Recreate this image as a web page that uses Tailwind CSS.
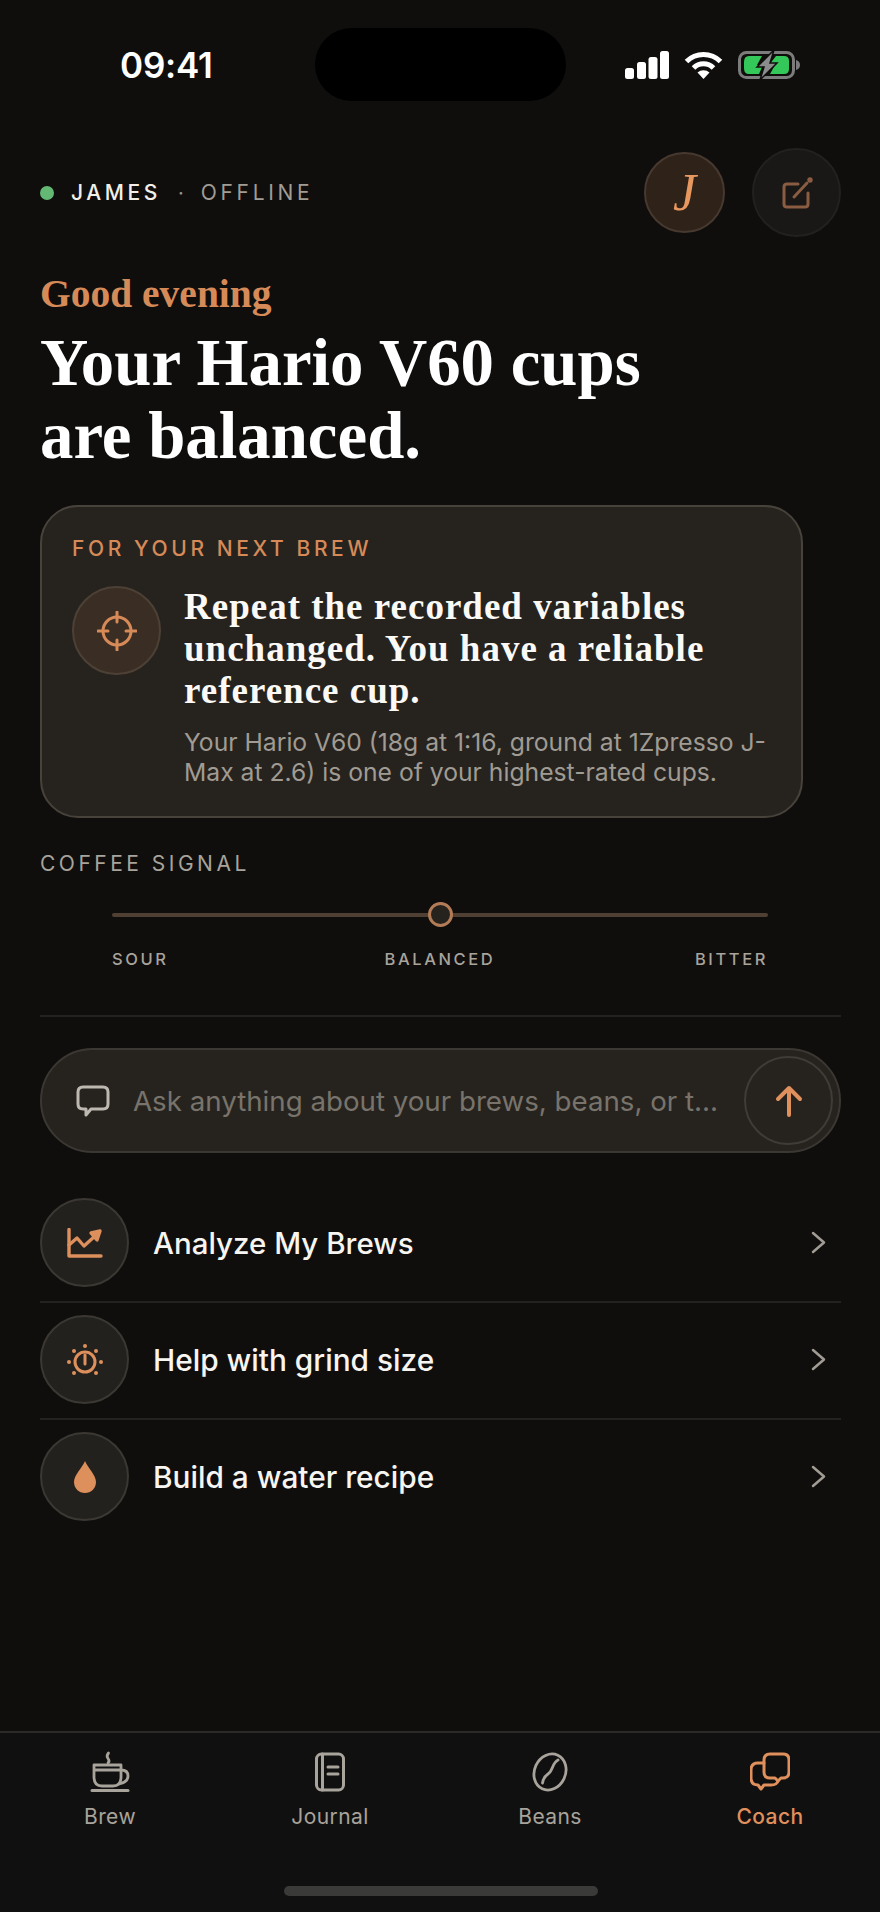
<!DOCTYPE html>
<html lang="en">
<head>
<meta charset="utf-8">
<script src="https://cdn.jsdelivr.net/npm/@tailwindcss/browser@4"></script>
<title>Coach</title>
</head>
<body class="m-0 bg-[#0f0e0d]">
<div class="relative w-[880px] h-[1912px] overflow-hidden bg-[#0f0e0d] text-white font-['Inter',sans-serif] flex flex-col">

  <!-- status bar -->
  <div class="flex items-center h-[73px] mt-[28px] pl-[120px] shrink-0">
    <div class="w-[195px] text-[35px] leading-[40px] font-semibold tracking-[-0.2px]">09:41</div>
    <div class="w-[251px] h-[73px] rounded-full bg-black"></div>
    <div class="flex items-center ml-[59px]">
      <svg width="44" height="28" viewBox="0 0 44 28" fill="#fff"><rect x="0" y="17" width="9" height="11" rx="2.5"/><rect x="12" y="11" width="9" height="17" rx="2.5"/><rect x="23.500" y="6" width="9" height="22" rx="2.500"/><rect x="35" y="0" width="9" height="28" rx="2.500"/></svg>
      <svg class="ml-[15px]" width="39" height="28" viewBox="0 0 39 28" fill="none" stroke="#fff" stroke-width="5"><path d="M2.500 10.500 A24 24 0 0 1 36.500 10.500"/><path d="M9.500 17 A14 14 0 0 1 29.500 17"/><path d="M19.500 28 L13.500 21.500 A9 9 0 0 1 25.500 21.500 Z" fill="#fff" stroke="none"/></svg>
      <svg class="ml-[15px]" width="63" height="30" viewBox="0 0 63 30" fill="none"><rect x="1.500" y="2.500" width="54" height="25" rx="7" stroke="#7c7c7c" stroke-width="3"/><path d="M6 12 Q6 6 11 6 H24 L19 15 H25 L21 24 H11 Q6 24 6 18 Z" fill="#34c759"/><path d="M38 6 H46 Q51 6 51 11 V19 Q51 24 46 24 H32 L37 15 H31 Z" fill="#34c759"/><path d="M36 0 L19 17 H26 L22 30 L39 13 H32 Z" fill="#8b8d8c" stroke="#0f0e0d" stroke-width="1.500"/><path d="M58 10 Q62 11 62 15 Q62 19 58 20 Z" fill="#7c7c7c"/></svg>
    </div>
  </div>

  <!-- header -->
  <div class="flex items-center mt-[47px] pl-[40px] pr-[39px] shrink-0">
    <span class="w-[14px] h-[14px] rounded-full bg-[#63b873]"></span>
    <span class="ml-[17px] text-[21px] font-medium tracking-[3.6px] text-[#f2efe9]">JAMES</span>
    <span class="ml-[17px] text-[20px] text-[#9b968e]">·</span>
    <span class="ml-[17px] text-[21px] tracking-[3.7px] text-[#a19c94]">OFFLINE</span>
    <div class="ml-auto w-[81px] h-[81px] rounded-full bg-[#2e2219] border-2 border-[#47392f] flex items-center justify-center font-['Liberation_Serif',serif] italic text-[52px] leading-none text-[#e8985f]">J</div>
    <div class="ml-[27px] w-[89px] h-[89px] rounded-full bg-[#191816] border-2 border-[#23211f] flex items-center justify-center">
      <svg width="32" height="32" viewBox="0 0 32 32" fill="none" stroke="#8a5c41" stroke-width="3" stroke-linecap="round" stroke-linejoin="round"><path d="M17 7 H6 Q3 7 3 10 V27 Q3 30 6 30 H24 Q27 30 27 27 V16"/><path d="M13 20 L26 6"/><circle cx="29" cy="3" r="1.200" fill="#8a5c41"/></svg>
    </div>
  </div>

  <!-- greeting -->
  <div class="mt-[35px] ml-[40px] text-[39.500px] leading-[44px] font-['Liberation_Serif',serif] font-bold text-[#d68a58] shrink-0">Good evening</div>
  <h1 class="mt-[10px] ml-[40px] text-[66.800px] leading-[73px] font-['Liberation_Serif',serif] font-bold text-white shrink-0">Your Hario V60 cups<br>are balanced.</h1>

  <!-- card -->
  <div class="mt-[33px] ml-[40px] w-[763px] h-[313px] rounded-[38px] bg-[#26231f] border-2 border-[#47423a] pl-[30px] pt-[28px] shrink-0">
    <div class="text-[21px] leading-[28px] font-medium tracking-[3.6px] text-[#d68a58]">FOR YOUR NEXT BREW</div>
    <div class="flex mt-[23px]">
      <div class="w-[89px] h-[89px] rounded-full bg-[#3a2d23] border-2 border-[#4d4136] flex items-center justify-center shrink-0">
        <svg width="40" height="40" viewBox="0 0 40 40" fill="none" stroke="#d68a58" stroke-width="3" stroke-linecap="round"><circle cx="20" cy="20" r="14"/><path d="M20 1 V11 M20 29 V39 M1 20 H11 M29 20 H39"/></svg>
      </div>
      <div class="ml-[23px] w-[600px]">
        <div class="text-[37px] leading-[42px] tracking-[1px] font-['Liberation_Serif',serif] font-bold text-[#fbf9f6]">Repeat the recorded variables<br>unchanged. You have a reliable<br>reference cup.</div>
        <div class="mt-[15px] text-[24.700px] leading-[30px] text-[#a09b93]">Your Hario V60 (18g at 1:16, ground at 1Zpresso J-<br>Max at 2.6) is one of your highest-rated cups.</div>
      </div>
    </div>
  </div>

  <!-- signal -->
  <div class="mt-[32px] ml-[40px] text-[21px] leading-[28px] tracking-[3.5px] text-[#a8a39b] shrink-0">COFFEE SIGNAL</div>
  <div class="relative mt-[24px] ml-[112px] w-[656px] h-[25px] flex items-center shrink-0">
    <div class="w-full h-[4px] rounded-full bg-[#4f4033]"></div>
    <div class="absolute left-[316px] top-0 w-[25px] h-[25px] rounded-full bg-[#26231f] border-[3px] border-[#b37c56]"></div>
  </div>
  <div class="mt-[20px] ml-[112px] w-[656px] grid grid-cols-3 text-[16.500px] leading-[24px] font-medium tracking-[2.6px] text-[#a8a39b] shrink-0">
    <span>SOUR</span><span class="text-center">BALANCED</span><span class="text-right">BITTER</span>
  </div>
  <div class="mt-[44px] ml-[40px] w-[801px] h-[2px] bg-[#232220] shrink-0"></div>

  <!-- input -->
  <div class="mt-[31px] ml-[40px] w-[801px] h-[105px] rounded-full bg-[#26231f] border-2 border-[#3b3833] flex items-center pl-[34px] pr-[6px] shrink-0">
    <svg class="shrink-0" width="34" height="32" viewBox="0 0 34 32" fill="none" stroke="#bdb8b0" stroke-width="3" stroke-linejoin="round"><path d="M7 2 H27 Q32 2 32 7 V19 Q32 24 27 24 H15 L10 30 V24 H7 Q2 24 2 19 V7 Q2 2 7 2 Z"/></svg>
    <div class="ml-[23px] w-[600px] text-[27.700px] leading-[36px] text-[#78736b] whitespace-nowrap">Ask anything about your brews, beans, or t...</div>
    <div class="ml-auto w-[89px] h-[89px] rounded-full border-2 border-[#3f3b36] flex items-center justify-center shrink-0">
      <svg width="28" height="32" viewBox="0 0 28 32" fill="none" stroke="#e0905c" stroke-width="4" stroke-linecap="round" stroke-linejoin="round"><path d="M14 30 V3 M3 14 L14 3 L25 14"/></svg>
    </div>
  </div>

  <!-- rows -->
  <div class="mt-[45px] ml-[40px] w-[801px] flex flex-col gap-[12px] shrink-0">
    <div class="flex items-center h-[105px] pb-[14px] border-b-2 border-[#232220]">
      <div class="w-[89px] h-[89px] rounded-full bg-[#23211e] border-2 border-[#3b3833] flex items-center justify-center">
        <svg width="36" height="30" viewBox="0 0 36 30" fill="none" stroke="#dd8f5c" stroke-width="3.400" stroke-linecap="round" stroke-linejoin="round"><path d="M2 1.500 V28 H34"/><path d="M2 17 L10 10 L17 18 L28 8"/><path d="M24 5 L33 3 L30 12 Z" fill="#dd8f5c"/></svg>
      </div>
      <div class="ml-[24px] text-[29.500px] leading-[36px] font-medium text-[#f7f5f1]">Analyze My Brews</div>
      <svg class="ml-auto mr-[15px]" width="15" height="23" viewBox="0 0 15 23" fill="none" stroke="#a09b93" stroke-width="2.500" stroke-linecap="round" stroke-linejoin="round"><path d="M2 2 L13 11.500 L2 21"/></svg>
    </div>
    <div class="flex items-center h-[105px] pb-[14px] border-b-2 border-[#232220]">
      <div class="w-[89px] h-[89px] rounded-full bg-[#23211e] border-2 border-[#3b3833] flex items-center justify-center">
        <svg class="mt-[4px]" width="36" height="36" viewBox="0 0 36 36" fill="none" stroke="#dd8f5c" stroke-width="3" stroke-linecap="round"><circle cx="18" cy="18" r="10"/><path d="M18 11 V20"/><g fill="#dd8f5c" stroke="none"><circle cx="18" cy="2" r="2"/><circle cx="7" cy="7" r="2"/><circle cx="29" cy="7" r="2"/><circle cx="2" cy="18" r="2"/><circle cx="34" cy="18" r="2"/><circle cx="7" cy="29" r="2"/><circle cx="29" cy="29" r="2"/></g></svg>
      </div>
      <div class="ml-[24px] text-[29.800px] leading-[36px] font-medium text-[#f7f5f1]">Help with grind size</div>
      <svg class="ml-auto mr-[15px]" width="15" height="23" viewBox="0 0 15 23" fill="none" stroke="#a09b93" stroke-width="2.500" stroke-linecap="round" stroke-linejoin="round"><path d="M2 2 L13 11.500 L2 21"/></svg>
    </div>
    <div class="flex items-center h-[89px]">
      <div class="w-[89px] h-[89px] rounded-full bg-[#23211e] border-2 border-[#3b3833] flex items-center justify-center">
        <svg width="22" height="32" viewBox="0 0 22 32" fill="#dd8f5c"><path d="M11 0 C14 7 22 14 22 21 C22 27.500 17 32 11 32 C5 32 0 27.500 0 21 C0 14 8 7 11 0 Z"/></svg>
      </div>
      <div class="ml-[24px] text-[29.800px] leading-[36px] font-medium text-[#f7f5f1]">Build a water recipe</div>
      <svg class="ml-auto mr-[15px]" width="15" height="23" viewBox="0 0 15 23" fill="none" stroke="#a09b93" stroke-width="2.500" stroke-linecap="round" stroke-linejoin="round"><path d="M2 2 L13 11.500 L2 21"/></svg>
    </div>
  </div>

  <!-- tab bar -->
  <div class="mt-auto h-[181px] shrink-0 bg-[#111010] border-t-2 border-[#2b2a28] flex flex-col">
    <div class="grid grid-cols-4 pt-[18px]">
      <div class="flex flex-col items-center text-[#a8a39b]">
        <svg width="40" height="42" viewBox="0 0 40 42" fill="none" stroke="currentColor" stroke-width="2.800" stroke-linecap="round" stroke-linejoin="round"><path d="M18.500 2 Q16 5 18 7.500 Q20 10 18 12"/><path d="M4 14 H31 V26 Q31 35 23 35 H12 Q4 35 4 26 Z"/><path d="M5 19 H30"/><path d="M31 19 Q38 19 38 25 Q38 31 29 33"/><path d="M2 39.500 H38" stroke-width="3"/></svg>
        <div class="mt-[10px] text-[21px] leading-[28px] tracking-[0.4px]">Brew</div>
      </div>
      <div class="flex flex-col items-center text-[#a8a39b]">
        <svg width="30" height="42" viewBox="0 0 30 42" fill="none" stroke="currentColor" stroke-width="3" stroke-linecap="round"><rect x="1.500" y="3" width="27" height="36" rx="5"/><path d="M7.500 3 V39 M13 16 H23 M13 23 H23"/></svg>
        <div class="mt-[10px] text-[21px] leading-[28px] tracking-[0.4px]">Journal</div>
      </div>
      <div class="flex flex-col items-center text-[#a8a39b]">
        <svg width="36" height="42" viewBox="0 0 36 42" fill="none" stroke="currentColor" stroke-width="2.800" stroke-linecap="round"><ellipse cx="18" cy="21" rx="15.500" ry="18.500" transform="rotate(25 18 21)"/><path d="M26 9 C20 12 21 20 16 23 C13 25 11 28 10.500 32"/></svg>
        <div class="mt-[10px] text-[21px] leading-[28px] tracking-[0.4px]">Beans</div>
      </div>
      <div class="flex flex-col items-center text-[#e0905c]">
        <svg width="40" height="42" viewBox="0 0 40 42" fill="none" stroke="currentColor" stroke-width="3" stroke-linecap="round" stroke-linejoin="round"><path d="M20 3 H33 Q39 3 39 9 V21 Q39 27 33 27 H31 L28 30 L25 27 H20 Q14 27 14 21 V9 Q14 3 20 3 Z"/><path d="M14 12 H8 Q1 12 1 19 V27 Q1 34 8 34 L11 38 L14 34 H21 Q27 34 28 30"/></svg>
        <div class="mt-[10px] text-[21px] leading-[28px] font-medium tracking-[0.4px]">Coach</div>
      </div>
    </div>
    <div class="mt-auto mb-[16px] ml-[284px] w-[314px] h-[10px] rounded-full bg-[#3a3a39]"></div>
  </div>
</div>
</body>
</html>
